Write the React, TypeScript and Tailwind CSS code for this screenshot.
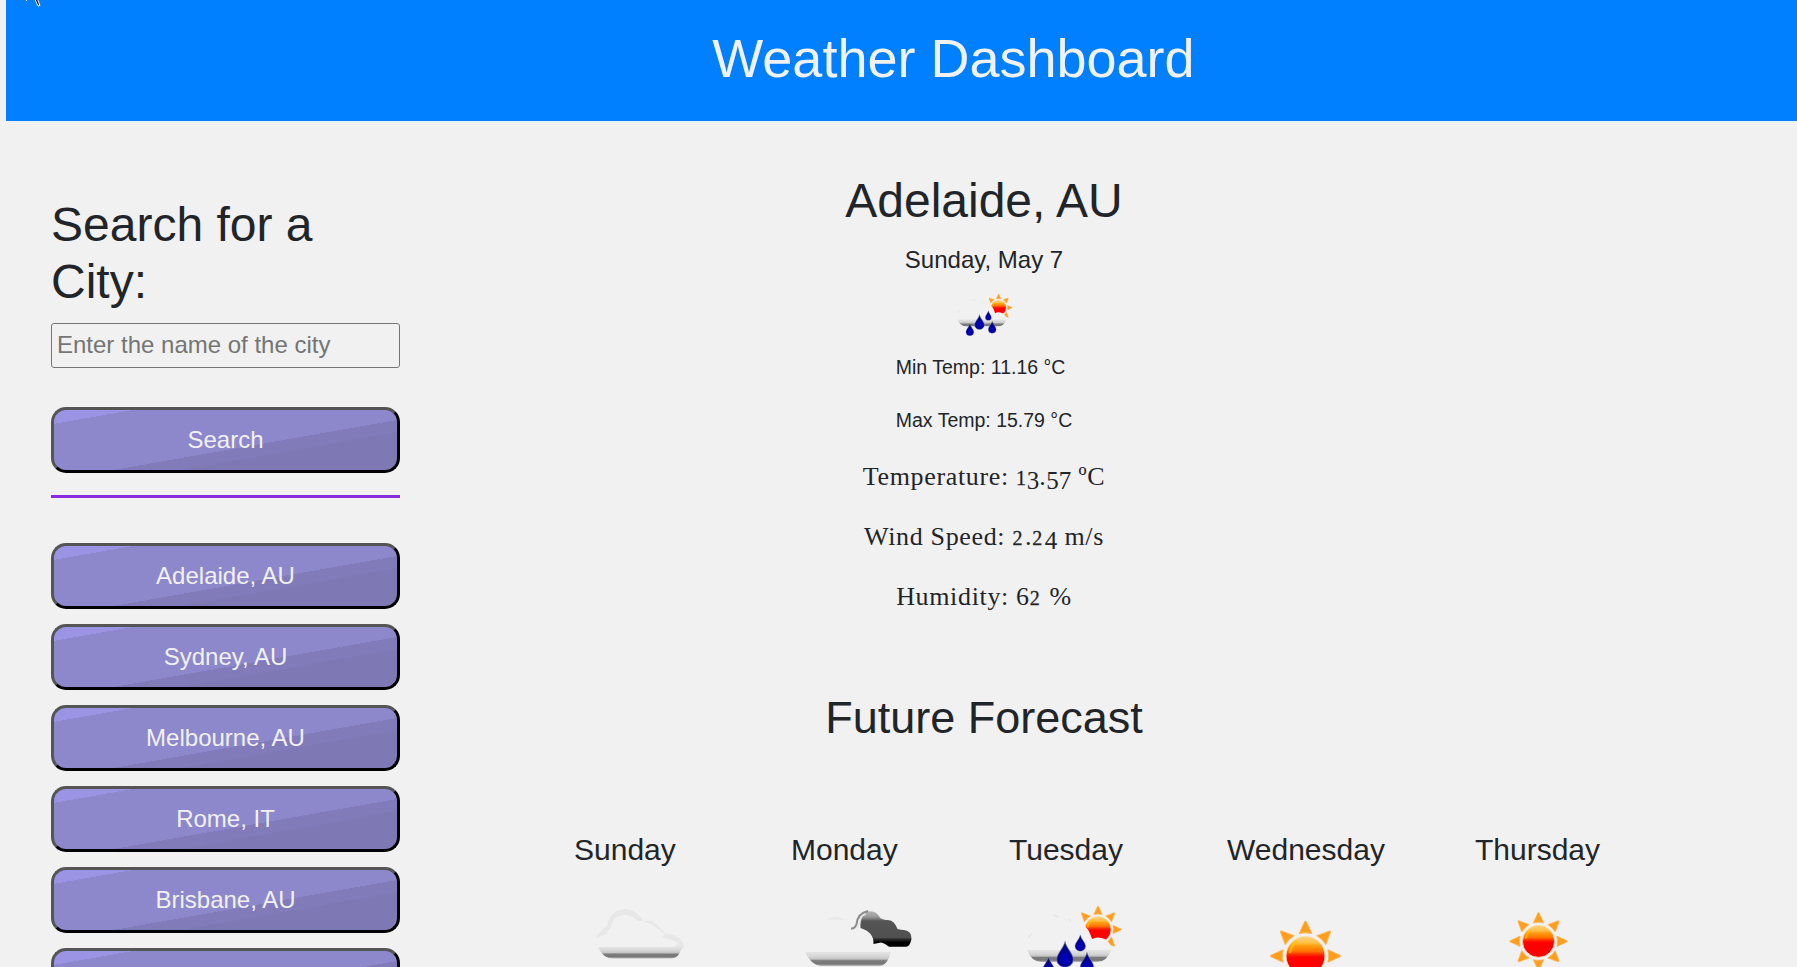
import React from "react";

const CITIES = ["Adelaide, AU", "Sydney, AU", "Melbourne, AU", "Rome, IT", "Brisbane, AU", ""];

const RAYS = [0, 45, 90, 135, 180, 225, 270, 315];

function Defs() {
  return (
    <svg className="absolute size-0" aria-hidden="true">
      <defs>
        <linearGradient id="sun" x1="0" y1="0" x2="0" y2="1">
          <stop offset="0" stopColor="#ffd27a" />
          <stop offset="0.16" stopColor="#ffc04a" />
          <stop offset="0.24" stopColor="#ff9d10" />
          <stop offset="0.38" stopColor="#ff7200" />
          <stop offset="0.46" stopColor="#ff2d00" />
          <stop offset="0.54" stopColor="#ff0000" />
          <stop offset="1" stopColor="#ff0000" />
        </linearGradient>
        <linearGradient id="base" x1="0" y1="0" x2="0" y2="1">
          <stop offset="0" stopColor="#e4e4e4" />
          <stop offset="0.3" stopColor="#d6d6d6" />
          <stop offset="0.5" stopColor="#c4c4c4" />
          <stop offset="0.62" stopColor="#7c7c7c" />
          <stop offset="0.85" stopColor="#777777" />
          <stop offset="1" stopColor="#bbbbbb" />
        </linearGradient>
        <linearGradient id="dark" x1="0" y1="0" x2="0" y2="1">
          <stop offset="0" stopColor="#b0b0b0" />
          <stop offset="0.14" stopColor="#a0a0a0" />
          <stop offset="0.2" stopColor="#858585" />
          <stop offset="0.28" stopColor="#555555" />
          <stop offset="0.74" stopColor="#505050" />
          <stop offset="0.78" stopColor="#303030" />
          <stop offset="0.88" stopColor="#000000" />
          <stop offset="1" stopColor="#000000" />
        </linearGradient>
        <radialGradient id="drop" cx="0.5" cy="0.7" r="0.6">
          <stop offset="0" stopColor="#0000c8" />
          <stop offset="0.5" stopColor="#0000a0" />
          <stop offset="1" stopColor="#0a1060" />
        </radialGradient>
      </defs>
    </svg>
  );
}

function Sun({ x, y, r }: { x: number; y: number; r: number }) {
  return (
    <g transform={`translate(${x} ${y}) scale(${r / 20})`}>
      {RAYS.map((a) => (
        <path
          key={a}
          d="M-6.500 -23 L-0.800 -35.500 Q0 -36.500 0.800 -35.500 L6.500 -23 Q0 -24.500 -6.500 -23Z"
          fill="#ff9d1c"
          stroke="#fbb860"
          strokeWidth="1"
          strokeLinejoin="round"
          transform={`rotate(${a})`}
        />
      ))}
      <circle r="20" fill="url(#sun)" stroke="#f7dcae" strokeWidth="1" />
      <path d="M-16 -3 Q-15 -11 -8 -15" fill="none" stroke="#ffc400" strokeWidth="2.5" opacity="0.7" />
    </g>
  );
}

function Drop({ x, y, s }: { x: number; y: number; s: number }) {
  return (
    <path
      transform={`translate(${x} ${y}) scale(${s})`}
      d="M0 -14 C1.500 -7 8.5 -1 8.5 4.500 A8.500 8 0 0 1 -8.500 4.500 C-8.500 -1 -1.500 -7 0 -14Z"
      fill="url(#drop)"
      stroke="#8f90b8"
      strokeWidth="0.6"
    />
  );
}

function RainIcon({ className }: { className: string }) {
  return (
    <svg viewBox="0 0 129 112" className={className}>
      <Sun x={89} y={61.5} r={13} />
      <path d="M19 95 Q14 82 22 76 Q24 66 32 64 Q36 40 56 42 Q67 44 73 56 Q80 60 83 71 Q88 68 96 71 Q103 76 103 84 L100 95Z" fill="#f1f1f1" />
      <path d="M18 82 H102 Q98 94 88 94 H32 Q22 93 18 82Z" fill="url(#base)" />
      <path d="M19 70 L23 65 M45 47 L49 49 M60 51 L62 54" stroke="#e2e2e2" strokeWidth="1" />
      <Drop x={56} y={87} s={0.98} />
      <Drop x={71.3} y={75.5} s={0.62} />
      <Drop x={39.5} y={100} s={0.8} />
      <Drop x={78} y={95.5} s={0.8} />
    </svg>
  );
}

function CloudIcon() {
  return (
    <svg viewBox="0 0 150 99" className="h-[99px] w-[150px]">
      <path d="M22 70 Q25 64 33 58 Q36 42 51 41 Q62 41 69 53 L64 53 Q57 46 49 47 Q38 49 37 59 Q34 62 32 66Z" fill="#e7e7e7" />
      <path d="M70 54 Q79 49 91 66 Q107 66 110 78 Q107 85 101 82 Q98 80 104 75 Q97 71 91 70 Q86 70 91 67 Q81 56 70 54Z" fill="#e7e7e7" />
      <path d="M24 79 H108 Q105 90.500 97 90.500 H39 Q29 90.500 24 79Z" fill="url(#base)" />
    </svg>
  );
}

function BrokenCloudsIcon() {
  return (
    <svg viewBox="0 0 150 99" className="h-[99px] w-[150px]">
      <path
        d="M69.500 60 Q68 47 76 43.500 Q85 41.500 89.500 50.300 Q93 52 95 52 Q103 51 106.500 61 Q110 62 113 62 Q121 63 120.500 71 Q119 78.700 115 78.700 H98 Q93 75 90 74.500 L82.500 76 Q83 64 69.500 60Z"
        fill="url(#dark)"
      />
      <path d="M60 60.500 Q64 61 65.500 56 Q67 45 77 43" fill="none" stroke="#8a8a8a" strokeWidth="2" />
      <path d="M64 61 Q69 57 69.500 52 Q70 47 75 46" fill="none" stroke="#e4e4e4" strokeWidth="1.500" />
      <path d="M34.500 51.500 Q44 46.500 53.500 51.500Z" fill="#e7e7e7" />
      <path d="M14 84 H100 Q96 98 88 98 H30 Q20 97 14 84Z" fill="url(#base)" />
    </svg>
  );
}

function SunIcon({ x, y, r }: { x: number; y: number; r: number }) {
  return (
    <svg viewBox="0 0 160 99" className="h-[99px] w-[160px]">
      <Sun x={x} y={y} r={r} />
    </svg>
  );
}

function CityButton({ children }: { children: React.ReactNode }) {
  return (
    <button className="flex h-[66px] w-full items-center justify-center rounded-[15px] border-3 border-t-[#555555] border-r-black border-b-black border-l-[#555555] bg-[linear-gradient(170deg,#9b93e3_11.5%,#8d87cc_11.5%,#8d87cc_58.5%,#827bb9_58.5%,#827bb9_68.5%,#7e78b4_68.5%)] bg-origin-padding text-[24px] leading-[36px] text-[#f1f1f1]">
      {children}
    </button>
  );
}

/* Old-style figures: 0-2 at x-height, 3-5, 7 and 9 hanging below the baseline. */
function Figures({ value }: { value: string }) {
  return (
    <>
      {value.split(/(1+|[02]+|[34579]+)/).map((part, i) =>
        /^1/.test(part) ? (
          <span key={i} className="text-[20px] leading-none tracking-[0.6px] [-webkit-text-stroke:0.3px]">{part}</span>
        ) : /^[02]/.test(part) ? (
          <span key={i} className="text-[20px] leading-none tracking-[2.6px] [-webkit-text-stroke:0.3px]">{part}</span>
        ) : /^[34579]/.test(part) ? (
          <span key={i} className="align-[-4px] text-[25px] leading-none tracking-normal">{part}</span>
        ) : (
          part
        ),
      )}
    </>
  );
}

function Detail({ label, value, unit }: { label: string; value: string; unit: string }) {
  return (
    <p className="mb-6 h-9 text-center font-['Liberation_Serif',serif] text-[26px] leading-[36px] tracking-[0.65px] whitespace-nowrap">
      {label}: <Figures value={value} /> {unit}
    </p>
  );
}

export default function App() {
  return (
    <div className="relative h-[967px] w-full overflow-hidden bg-[#f1f1f1] font-['Liberation_Sans',sans-serif] text-[#212529]">
      <Defs />
      <header className="ml-1.5 h-[121px] w-[1895px] bg-[#0080ff] pt-[26px]">
        <h1 className="text-center text-[54px] leading-[64.8px] text-[#f1f1f1]">Weather Dashboard</h1>
      </header>
      <svg viewBox="0 0 20 8" className="absolute top-0 left-6 h-2 w-5">
        <path d="M10 -3 L14 6 L16 5.500 L12.500 -3Z" fill="#000000" stroke="#ffffff" strokeWidth="1" />
        <path d="M2.500 0 V1" stroke="#ffffff" strokeWidth="1" />
      </svg>

      <div className="flex">
        <aside className="ml-[51px] w-[349px] shrink-0 pt-[74.5px]">
          <h2 className="mb-3 pr-10 text-[48px] leading-[57.6px]">Search for a City:</h2>
          <input
            className="mb-[39px] block h-[45px] w-full rounded-[3px] border border-[#767676] bg-transparent px-[5px] text-[24px] placeholder:text-[#757575]"
            placeholder="Enter the name of the city"
          />
          <CityButton>Search</CityButton>
          <hr className="mt-[22px] mb-[45px] border-0 border-t-3 border-[#8a2be2]" />
          <div className="flex flex-col gap-[15px]">
            {CITIES.map((c, i) => (
              <CityButton key={i}>{c}</CityButton>
            ))}
          </div>
        </aside>

        <main className="ml-[173px] w-[1224px] shrink-0 pt-[50.7px]">
          <section className="flex w-[822px] flex-col items-center">
            <h2 className="text-[48px] leading-[57.6px]">Adelaide, AU</h2>
            <p className="mt-[16.7px] text-[24px] leading-[28.8px]">Sunday, May 7</p>
            <RainIcon className="mt-[-2.8px] mb-[15.8px] h-[65px] w-[74.8px]" />
            <div className="text-[19.5px] leading-[29.25px]">
              <p className="mb-6">Min Temp: 11.16 °C</p>
              <p className="mb-6">Max Temp: 15.79 °C</p>
            </div>
            <Detail label="Temperature" value="13.57" unit="ºC" />
            <Detail label="Wind Speed" value="2.24" unit="m/s" />
            <Detail label="Humidity" value="62" unit="%" />
            <h2 className="mt-[51.5px] text-[45px] leading-[54px]">Future Forecast</h2>
          </section>
          <section className="mt-[87px] flex pl-px text-[30px] leading-9">
            <div className="w-[217px]">
              <h3>Sunday</h3>
              <CloudIcon />
            </div>
            <div className="w-[218px]">
              <h3>Monday</h3>
              <BrokenCloudsIcon />
            </div>
            <div className="w-[218px]">
              <h3>Tuesday</h3>
              <RainIcon className="h-[112px] w-[129px]" />
            </div>
            <div className="w-[248px]">
              <h3>Wednesday</h3>
              <SunIcon x={78.5} y={88} r={19.5} />
            </div>
            <div className="w-[160px]">
              <h3>Thursday</h3>
              <SunIcon x={63.5} y={73.3} r={16} />
            </div>
          </section>
        </main>
      </div>
    </div>
  );
}
